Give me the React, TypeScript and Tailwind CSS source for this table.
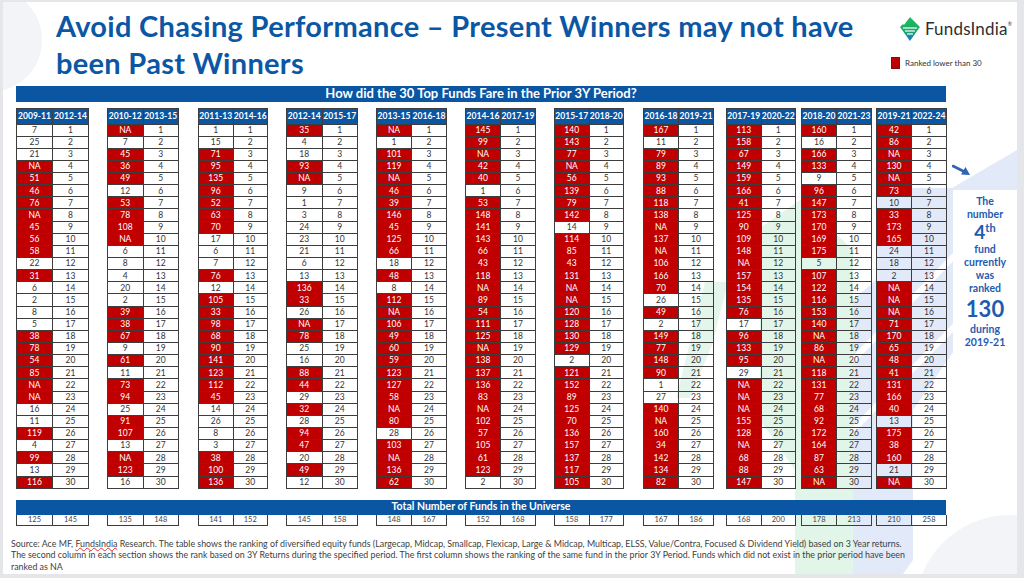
import React from 'react';

type Group = {
  prior: string;
  current: string;
  ml: string;
  w: string;
  ranks: string[];
  totals: [string, string];
};

const groups: Group[] = [
  { prior: '2009-11', current: '2012-14', ml: 'ml-0', w: 'w-[73px]', totals: ['125', '145'],
    ranks: ['7','25','21','NA','51','46','76','NA','45','56','58','22','31','6','2','8','5','38','78','54','85','NA','NA','16','11','119','4','99','13','116'] },
  { prior: '2010-12', current: '2013-15', ml: 'ml-[18px]', w: 'w-[72px]', totals: ['135', '148'],
    ranks: ['NA','7','45','36','49','12','53','78','108','NA','6','8','4','20','2','39','38','67','9','61','11','73','94','25','91','107','13','NA','123','16'] },
  { prior: '2011-13', current: '2014-16', ml: 'ml-[19px]', w: 'w-[70px]', totals: ['141', '152'],
    ranks: ['1','15','71','95','135','96','52','63','70','17','6','7','76','12','105','33','98','68','90','141','123','112','45','14','26','8','3','38','100','136'] },
  { prior: '2012-14', current: '2015-17', ml: 'ml-[18px]', w: 'w-[72px]', totals: ['145', '158'],
    ranks: ['35','4','18','93','NA','9','1','3','24','23','21','6','13','136','33','26','NA','78','25','16','88','44','29','32','28','94','47','20','49','12'] },
  { prior: '2013-15', current: '2016-18', ml: 'ml-[18px]', w: 'w-[71px]', totals: ['148', '167'],
    ranks: ['NA','1','101','119','NA','46','39','146','45','125','66','18','48','8','112','NA','106','49','60','59','123','127','58','NA','80','28','103','NA','136','62'] },
  { prior: '2014-16', current: '2017-19', ml: 'ml-[18px]', w: 'w-[71px]', totals: ['152', '168'],
    ranks: ['145','99','NA','42','40','1','53','148','141','143','66','43','118','NA','89','54','111','125','NA','138','137','136','83','NA','102','57','105','61','123','2'] },
  { prior: '2015-17', current: '2018-20', ml: 'ml-[18px]', w: 'w-[70px]', totals: ['158', '177'],
    ranks: ['140','143','77','NA','56','139','79','142','14','114','85','43','131','NA','NA','120','128','130','129','2','121','152','89','125','70','136','157','137','117','105'] },
  { prior: '2016-18', current: '2019-21', ml: 'ml-[19px]', w: 'w-[71px]', totals: ['167', '186'],
    ranks: ['167','11','79','89','93','88','118','138','NA','137','NA','106','166','70','26','49','2','149','77','148','90','1','27','140','NA','160','34','142','134','82'] },
  { prior: '2017-19', current: '2020-22', ml: 'ml-[12px]', w: 'w-[70px]', totals: ['168', '200'],
    ranks: ['113','158','67','149','159','166','41','125','90','109','148','NA','157','154','135','76','17','96','133','95','29','NA','NA','NA','155','128','NA','68','88','147'] },
  { prior: '2018-20', current: '2021-23', ml: 'ml-[5px]', w: 'w-[71px]', totals: ['178', '213'],
    ranks: ['160','16','166','133','9','96','147','173','170','169','175','5','107','122','116','153','140','NA','86','NA','118','131','77','68','92','172','164','87','63','NA'] },
  { prior: '2019-21', current: '2022-24', ml: 'ml-[4px]', w: 'w-[71px]', totals: ['210', '258'],
    ranks: ['42','86','NA','130','NA','73','10','33','173','165','24','18','2','NA','NA','NA','71','170','65','48','41','131','166','40','13','175','38','160','21','NA'] },
];

// NA or worse than 30 gets the red fill
const isLower = (v: string) => v === 'NA' || Number(v) > 30;

function Watermark() {
  return (
    <svg className="absolute inset-0 w-full h-full pointer-events-none" viewBox="3 2 1014 572" preserveAspectRatio="none">
      <circle cx="-10" cy="40" r="52" fill="#f3f4f7" />
      <circle cx="1010" cy="610" r="95" fill="#f3f4f7" />
      {/* green arm + stem */}
      <polygon points="760,228 800,200 853,250 853,578 795,578 795,470 760,420" fill="#e1f5e9" />
      <polygon points="705,282 728,282 712,345 690,398 676,398" fill="#e4f6ec" />
      {/* blue arm + stem */}
      <polygon points="876,188 952,188 1017,150 1017,260 913,410 913,560 900,578 853,578 853,300 876,280" fill="#e2eaf9" />
      <line x1="853" y1="360" x2="960" y2="250" stroke="#ffffff" strokeWidth="6" />
      <line x1="853" y1="430" x2="990" y2="290" stroke="#ffffff" strokeWidth="6" />
    </svg>
  );
}

function LogoMark() {
  return (
    <svg width="22" height="26" viewBox="0 0 22 26">
      <defs>
        <linearGradient id="fi" x1="0" y1="0" x2="0" y2="1">
          <stop offset="0" stopColor="#1dbf5a" />
          <stop offset="0.6" stopColor="#1aa86a" />
          <stop offset="1" stopColor="#1f6fd6" />
        </linearGradient>
      </defs>
      <polygon points="11,1 21,11 11,25 1,11" fill="url(#fi)" />
      <polygon points="3,7 9,1 11,1 5,9" fill="#ffffff" />
      <line x1="4" y1="12" x2="18" y2="12" stroke="#ffffff" strokeWidth="1.2" />
      <line x1="6" y1="15" x2="16" y2="15" stroke="#ffffff" strokeWidth="1.2" />
      <line x1="8" y1="18" x2="14" y2="18" stroke="#ffffff" strokeWidth="1.2" />
    </svg>
  );
}

function RankGroup({ g }: { g: Group }) {
  return (
    <div className={`${g.ml} ${g.w} flex-none flex flex-col`}>
      <div className="flex h-[16.5px] bg-[#0a56a3] border border-[#3d3d3d] text-white font-bold text-[8.5px]">
        <div className="flex-1 flex items-center justify-center border-r border-[#3d3d3d]">{g.prior}</div>
        <div className="flex-1 flex items-center justify-center">{g.current}</div>
      </div>
      <div className="border-l border-r border-[#3d3d3d]">
        {g.ranks.map((v, i) => (
          <div key={i} className="flex h-[12.15px] border-b border-[#3d3d3d] text-[8.5px] leading-none">
            <div
              className={`flex-1 flex items-center justify-center border-r border-[#3d3d3d] ${
                isLower(v) ? 'bg-[#c00000] text-white' : 'text-[#333]'
              }`}
            >
              {v}
            </div>
            <div className="flex-1 flex items-center justify-center text-[#333]">{i + 1}</div>
          </div>
        ))}
      </div>
    </div>
  );
}

function Callout() {
  return (
    <div className="ml-[4px] w-[66px] flex-none flex flex-col">
      <svg className="mt-[56px] ml-[1px]" width="19" height="12" viewBox="0 0 19 12">
        <line x1="1" y1="2" x2="13" y2="8" stroke="#3262b8" strokeWidth="2.6" strokeLinecap="round" />
        <polygon points="18,11 9,10.5 13.5,3" fill="#3262b8" />
      </svg>
      <div className="mt-[14px] ml-[2px] w-[64px] bg-white pt-[4.5px] pb-[3px] flex flex-col items-center text-[#1f5bb0] font-bold text-[10.5px] leading-[13px]">
        <div>The</div>
        <div>number</div>
        <div className="h-[22px] flex items-start text-[19px] leading-[22px]">
          4<span className="text-[11px] leading-[14px]">th</span>
        </div>
        <div>fund</div>
        <div>currently</div>
        <div>was</div>
        <div>ranked</div>
        <div className="text-[22px] leading-[28px]">130</div>
        <div>during</div>
        <div>2019-21</div>
      </div>
    </div>
  );
}

export default function App() {
  return (
    <div className="w-[1024px] h-[578px] bg-[#e4e6e9] pl-[3px] pt-[2px] overflow-hidden font-['Lato',sans-serif]">
      <div className="relative w-[1014px] h-[572px] bg-white overflow-hidden">
        <Watermark />
        <div className="relative flex flex-col">
          {/* Title + logo */}
          <div className="flex h-[84px]">
            <h1 className="pl-[53px] pt-[5px] text-[29px] leading-[37px] font-bold text-[#0b57a4] whitespace-nowrap tracking-[0.3px]">
              Avoid Chasing Performance – Present Winners may not have
              <br />
              been Past Winners
            </h1>
            <div className="ml-auto mr-[5px] w-[121px] flex-none flex flex-col">
              <div className="mt-[14px] pl-[8px] flex items-center gap-[4px]">
                <LogoMark />
                <span className="text-[17px] text-[#2f2f2f] tracking-[0.2px]">
                  FundsIndia<sup className="text-[5px] align-super">®</sup>
                </span>
              </div>
              <div className="mt-[15px] flex items-center gap-[5px]">
                <span className="w-[9px] h-[12px] bg-[#c00000] border border-[#7a1010]" />
                <span className="text-[8px] text-[#333]">Ranked lower than 30</span>
              </div>
            </div>
          </div>

          <div className="ml-[13px] w-[930px] h-[16px] bg-[#0a56a3] text-white font-bold text-[13px] flex items-center justify-center">
            How did the 30 Top Funds Fare in the Prior 3Y Period?
          </div>

          <div className="mt-[6px] ml-[13px] flex">
            {groups.map((g) => (
              <RankGroup key={g.prior} g={g} />
            ))}
            <Callout />
          </div>

          <div className="mt-[11px] ml-[13px] w-[930px] h-[15px] bg-[#0a56a3] text-white font-bold text-[10.5px] flex items-center justify-center">
            Total Number of Funds in the Universe
          </div>
          <div className="ml-[13px] flex">
            {groups.map((g) => (
              <div key={g.prior} className={`${g.ml} ${g.w} flex-none flex h-[11px] border border-t-0 border-[#3d3d3d] text-[7.5px] text-[#444]`}>
                <div className="flex-1 flex items-center justify-center border-r border-[#3d3d3d]">{g.totals[0]}</div>
                <div className="flex-1 flex items-center justify-center">{g.totals[1]}</div>
              </div>
            ))}
          </div>

          <div className="mt-[12px] ml-[8px] text-[8.85px] leading-[11.5px] text-[#404040] whitespace-nowrap">
            <div>
              Source: Ace MF,{' '}
              <span className="underline decoration-wavy decoration-[#e03030] decoration-[0.5px] underline-offset-[0px]">
                FundsIndia
              </span>{' '}
              Research. The table shows the ranking of diversified equity funds (Largecap, Midcap, Smallcap, Flexicap, Large
              &amp; Midcap, Multicap, ELSS, Value/Contra, Focused &amp; Dividend Yield) based on 3 Year returns.
            </div>
            <div>
              The second column in each section shows the rank based on 3Y Returns during the specified period. The first
              column shows the ranking of the same fund in the prior 3Y Period. Funds which did not exist in the prior period
              have been
            </div>
            <div>ranked as NA</div>
          </div>
        </div>
      </div>
    </div>
  );
}
